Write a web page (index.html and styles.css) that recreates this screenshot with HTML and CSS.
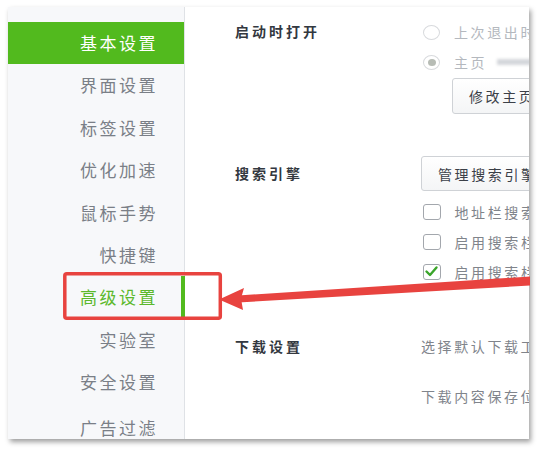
FILE: index.html
```html
<!DOCTYPE html>
<html lang="zh">
<head>
<meta charset="utf-8">
<link rel="stylesheet" href="styles.css">
</head>
<body>
<div class="frame">
  <nav class="sidebar">
    <div class="nav-item active">基本设置</div>
    <div class="nav-item">界面设置</div>
    <div class="nav-item">标签设置</div>
    <div class="nav-item">优化加速</div>
    <div class="nav-item">鼠标手势</div>
    <div class="nav-item">快捷键</div>
    <div class="nav-item hover">高级设置</div>
    <div class="nav-item">实验室</div>
    <div class="nav-item">安全设置</div>
    <div class="nav-item last">广告过滤</div>
  </nav>
  <main class="content">
    <section class="section s-start">
      <div class="label">启动时打开</div>
      <div class="options">
        <div class="row dim"><span class="radio"></span><span class="txt">上次退出时</span></div>
        <div class="row dim"><span class="radio checked"></span><span class="txt">主页</span><span class="blur-url"></span></div>
        <button class="btn btn-home">修改主页</button>
      </div>
    </section>
    <section class="section s-search">
      <div class="label">搜索引擎</div>
      <div class="options">
        <button class="btn btn-engine">管理搜索引擎</button>
        <div class="row"><span class="check"></span><span class="txt">地址栏搜索</span></div>
        <div class="row"><span class="check"></span><span class="txt">启用搜索栏</span></div>
        <div class="row"><span class="check on"><svg viewBox="0 0 19 16" width="19" height="16"><path d="M4.5 8.5 L8 12 L14.5 4.5" fill="none" stroke="#3aa52a" stroke-width="2.4" stroke-linecap="round" stroke-linejoin="round"/></svg></span><span class="txt">启用搜索栏</span></div>
      </div>
    </section>
    <section class="section s-download">
      <div class="label">下载设置</div>
      <div class="options">
        <div class="row tall"><span class="txt plain">选择默认下载工</span></div>
        <div class="row tall"><span class="txt plain">下载内容保存位</span></div>
      </div>
    </section>
  </main>
</div>
<svg class="annotation" width="538" height="449" viewBox="0 0 538 449">
  <rect x="64.8" y="273.8" width="155.5" height="44.5" rx="2" fill="none" stroke="#e8433f" stroke-width="3.5"/>
  <polygon points="238,295.5 530,276.5 530,285.5 238,302.5" fill="#e8433f"/>
  <polygon points="219,299.5 244,288 241,298.5 243,310" fill="#e8433f"/>
</svg>
</body>
</html>
```

FILE: styles.css
```css
html, body {
  margin: 0;
  padding: 0;
  background: #ffffff;
  font-family: "Noto Sans CJK SC", "Noto Sans", sans-serif;
}

body {
  position: relative;
  width: 538px;
  height: 449px;
  overflow: hidden;
}

.frame {
  margin: 7px 0 0 8px;
  width: 521px;
  height: 432px;
  display: flex;
  overflow: hidden;
  background: #ffffff;
  box-shadow: 2px 3px 5px rgba(0, 0, 0, 0.38);
}

.sidebar {
  width: 176px;
  flex: 0 0 176px;
  background: #f7f8fa;
  border-right: 1px solid #dfe2e6;
  padding-top: 15px;
  box-sizing: content-box;
}

.nav-item {
  height: 42.4px;
  line-height: 42.4px;
  text-align: right;
  padding-right: 26px;
  font-size: 17px;
  letter-spacing: 2.5px;
  color: #7a7f87;
  box-sizing: border-box;
}

.nav-item.active {
  background: #52ba1e;
  color: #ffffff;
}

.nav-item.hover {
  color: #5cb82c;
  margin-right: -1px;
  border-right: 4px solid #52ba1e;
  padding-right: 23px;
}

.nav-item.last {
  margin-top: 3px;
}

.content {
  flex: 1;
  padding-left: 50px;
  min-width: 0;
}

.section {
  display: grid;
  grid-template-columns: 186px 200px;
}

.label {
  font-size: 14px;
  font-weight: bold;
  letter-spacing: 3px;
  color: #333840;
  height: 29px;
  line-height: 29px;
  white-space: nowrap;
}

.options {
  display: flex;
  flex-direction: column;
  align-items: flex-start;
}

.row {
  height: 30px;
  display: flex;
  align-items: center;
  white-space: nowrap;
}

.row.tall {
  height: 50px;
}

.txt {
  font-size: 14px;
  letter-spacing: 2.6px;
  color: #80848b;
  margin-left: 14px;
}

.txt.plain {
  margin-left: 0;
}

.row.dim .txt {
  color: #b4b8be;
}

.radio {
  width: 15px;
  height: 13px;
  border: 1.5px solid #d8dadd;
  border-radius: 50%;
  margin-left: 2px;
  display: flex;
  align-items: center;
  justify-content: center;
  background: #ffffff;
}

.radio.checked::before {
  content: "";
  width: 8px;
  height: 7px;
  border-radius: 50%;
  background: #b7bcb5;
}

.blur-url {
  width: 38px;
  height: 6px;
  margin-left: 10px;
  background: #d4d7db;
  filter: blur(1.5px);
}

.check {
  width: 16px;
  height: 14px;
  border: 1.6px solid #a3a7ad;
  border-radius: 3px;
  margin-left: 1.5px;
  background: #ffffff;
  display: flex;
}

.check svg {
  margin: -1.6px;
}

.btn {
  font-family: inherit;
  font-size: 14px;
  letter-spacing: 2.6px;
  color: #3b4048;
  background: linear-gradient(#ffffff, #f4f5f6);
  border: 1px solid #cfd2d6;
  border-radius: 3px;
  text-align: left;
  white-space: nowrap;
}

.btn-home {
  margin: 1px 0 0 31px;
  height: 36px;
  padding: 0 20px 0 16px;
}

.btn-engine {
  margin: 0 0 6px 0;
  height: 35px;
  padding: 0 20px 0 16px;
}

.s-start {
  padding-top: 10px;
}

.s-search {
  margin-top: 42px;
}

.s-search .label {
  height: 35px;
  line-height: 35px;
}

.s-download {
  margin-top: 34px;
}

.s-download .label {
  height: 50px;
  line-height: 50px;
}

.annotation {
  position: absolute;
  left: 0;
  top: 0;
  pointer-events: none;
}
```
